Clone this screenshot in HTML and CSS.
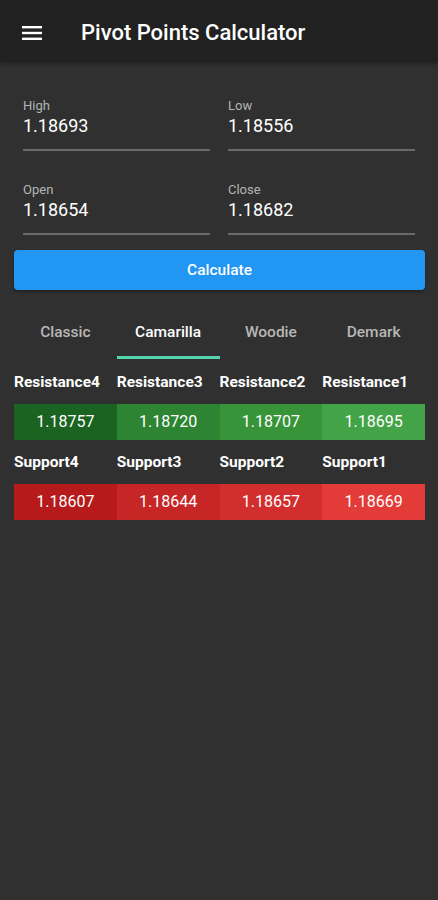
FILE: index.html
```html
<!DOCTYPE html>
<html lang="en">

<head>
    <meta charset="UTF-8">
    <title>Pivot Points Calculator</title>
    <link rel="stylesheet" href="styles.css">
</head>

<body>

    <header class="app-bar">
        <svg class="menu-icon" width="20" height="14" viewBox="0 0 20 14">
            <rect x="0" y="0" width="20" height="2.4" fill="#fff" />
            <rect x="0" y="5.8" width="20" height="2.4" fill="#fff" />
            <rect x="0" y="11.6" width="20" height="2.4" fill="#fff" />
        </svg>
        <h1>Pivot Points Calculator</h1>
    </header>

    <main class="content">
        <div class="fields">
            <div class="field">
                <label>High</label>
                <div class="value">1.18693</div>
            </div>
            <div class="field">
                <label>Low</label>
                <div class="value">1.18556</div>
            </div>
            <div class="field">
                <label>Open</label>
                <div class="value">1.18654</div>
            </div>
            <div class="field">
                <label>Close</label>
                <div class="value">1.18682</div>
            </div>
        </div>

        <button class="calc-btn">Calculate</button>

        <div class="tabs">
            <div class="tab">Classic</div>
            <div class="tab active">Camarilla</div>
            <div class="tab">Woodie</div>
            <div class="tab">Demark</div>
        </div>

        <div class="levels">
            <div class="level-label">Resistance4</div>
            <div class="level-label">Resistance3</div>
            <div class="level-label">Resistance2</div>
            <div class="level-label">Resistance1</div>
            <div class="cell r4">1.18757</div>
            <div class="cell r3">1.18720</div>
            <div class="cell r2">1.18707</div>
            <div class="cell r1">1.18695</div>
        </div>

        <div class="levels">
            <div class="level-label">Support4</div>
            <div class="level-label">Support3</div>
            <div class="level-label">Support2</div>
            <div class="level-label">Support1</div>
            <div class="cell s4">1.18607</div>
            <div class="cell s3">1.18644</div>
            <div class="cell s2">1.18657</div>
            <div class="cell s1">1.18669</div>
        </div>
    </main>

</body>

</html>
```

FILE: styles.css
```css
body,
html {
    margin: 0;
    padding: 0;
    height: 100%;
    font-family: Roboto, "Liberation Sans", sans-serif;
    background-color: #303030;
    color: #fff;
}

.app-bar {
    height: 62px;
    box-sizing: border-box;
    background-color: #212121;
    display: flex;
    align-items: center;
    padding: 3px 22px 0;
    box-shadow: 0 2px 4px rgba(0, 0, 0, 0.3);
}

.menu-icon {
    margin-right: 39px;
}

.app-bar h1 {
    margin: 0;
    font-size: 22px;
    font-weight: 500;
}

.content {
    padding: 0 13px 0 14px;
}

.fields {
    display: grid;
    grid-template-columns: 1fr 1fr;
    column-gap: 18px;
    row-gap: 31px;
    padding: 36px 10px 0 9px;
}

.field {
    border-bottom: 2px solid #6b6b6b;
    padding-bottom: 11px;
}

.field label {
    display: block;
    font-size: 13px;
    color: #b4b4b4;
    line-height: 16px;
}

.field .value {
    font-size: 18px;
    line-height: 24px;
}

.calc-btn {
    display: block;
    width: 100%;
    height: 40px;
    margin-top: 15px;
    border: none;
    border-radius: 4px;
    background-color: #2196f3;
    color: #fff;
    font-family: inherit;
    font-size: 15.5px;
    font-weight: 500;
    box-shadow: 0 2px 3px rgba(0, 0, 0, 0.3);
}

.tabs {
    display: flex;
    margin-top: 21px;
}

.tab {
    flex: 1;
    height: 48px;
    box-sizing: border-box;
    padding-top: 11px;
    line-height: 20px;
    text-align: center;
    font-size: 15.5px;
    font-weight: 500;
    color: #b7b7b7;
}

.tab.active {
    color: #fff;
    border-bottom: 3px solid #56d4b0;
}

.levels {
    display: grid;
    grid-template-columns: repeat(4, 1fr);
    margin-top: 14px;
}

.level-label {
    font-size: 15.5px;
    font-weight: 700;
    line-height: 18px;
    height: 31px;
    white-space: nowrap;
}

.cell {
    height: 36px;
    line-height: 36px;
    text-align: center;
    font-size: 16px;
}

.r4 { background-color: #1b6321; }
.r3 { background-color: #2d8433; }
.r2 { background-color: #379439; }
.r1 { background-color: #43a447; }

.s4 { background-color: #b61a1a; }
.s3 { background-color: #c62626; }
.s2 { background-color: #d22e2e; }
.s1 { background-color: #e33b37; }

.levels + .levels {
    margin-top: 13px;
}
```
